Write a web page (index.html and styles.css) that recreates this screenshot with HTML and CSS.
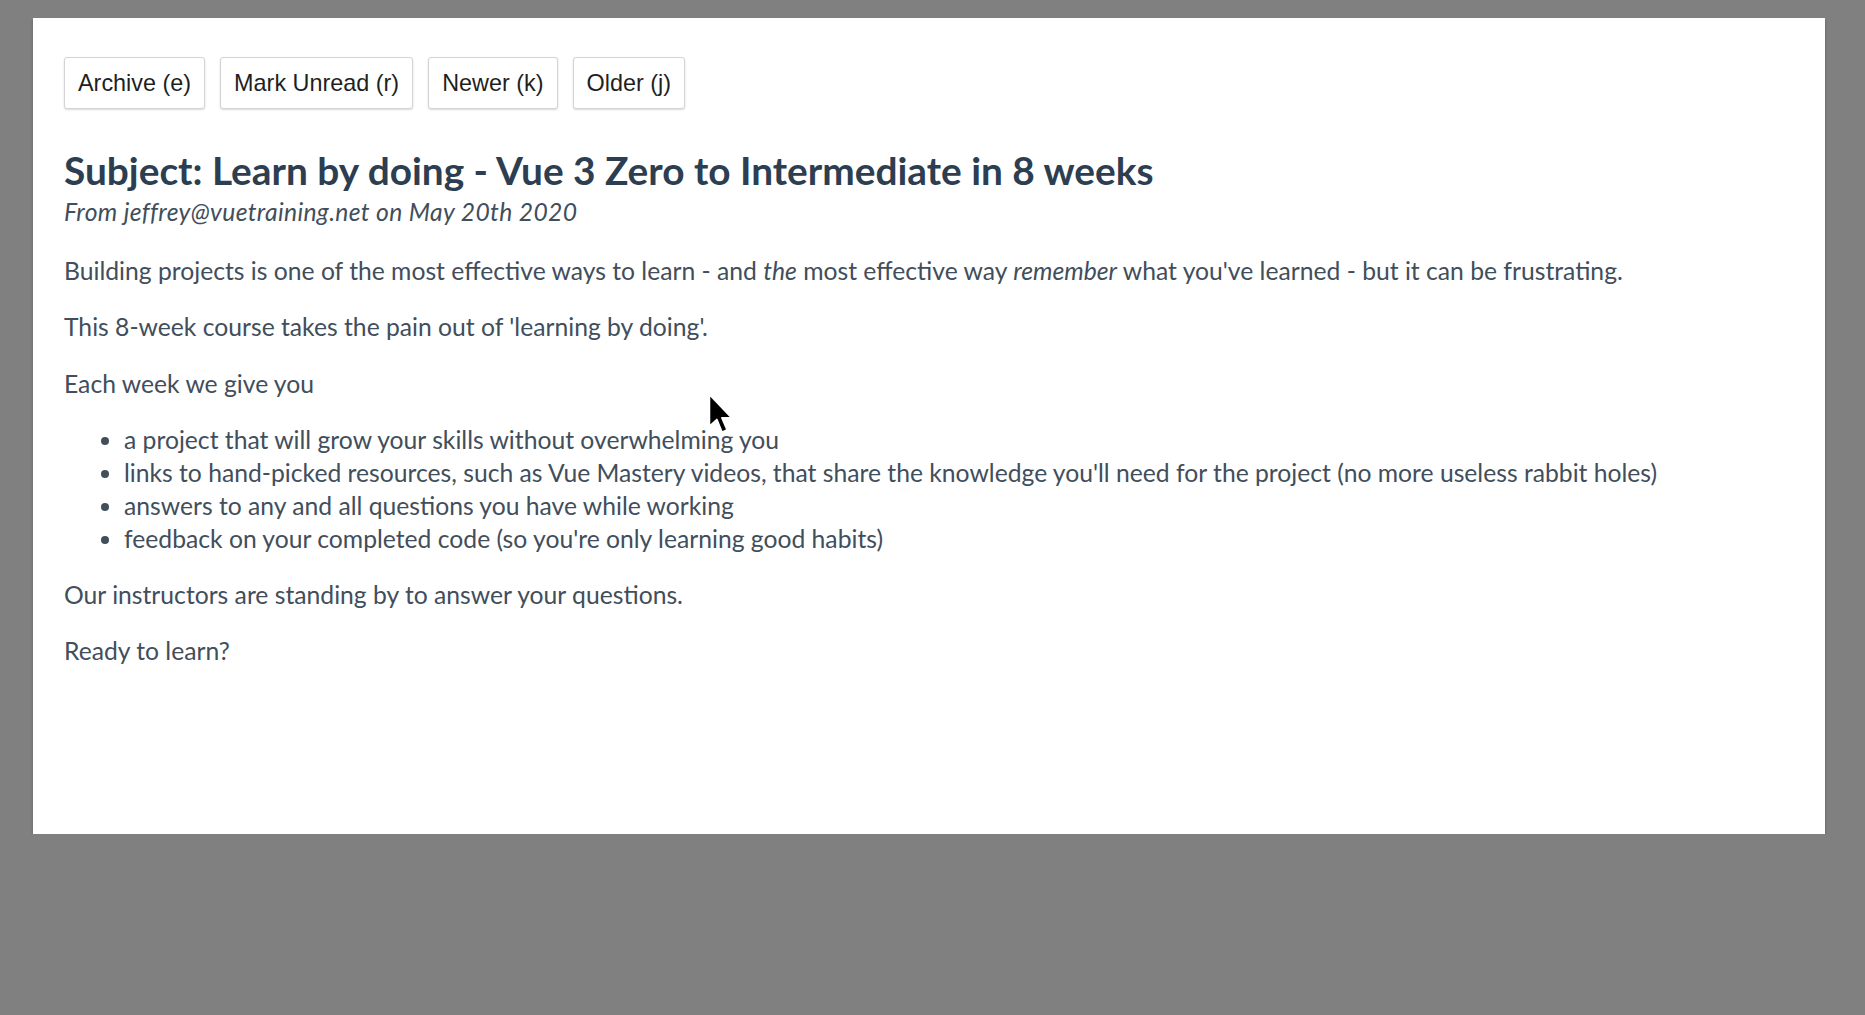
FILE: index.html
```html
<!DOCTYPE html>
<html lang="en">
<head>
<meta charset="utf-8">
<title>Email</title>
<link rel="stylesheet" href="styles.css">
</head>
<body>
<div class="window">
  <div class="toolbar">
    <button class="btn">Archive (e)</button>
    <button class="btn">Mark Unread (r)</button>
    <button class="btn">Newer (k)</button>
    <button class="btn">Older (j)</button>
  </div>
  <h2 class="subject">Subject: Learn by doing - Vue 3 Zero to Intermediate in 8 weeks</h2>
  <div class="from"><em>From jeffrey@vuetraining.net on May 20th 2020</em></div>
  <div class="body">
    <p>Building projects is one of the most effective ways to learn - and <em>the</em> most effective way <em>remember</em> what you've learned - but it can be frustrating.</p>
    <p>This 8-week course takes the pain out of 'learning by doing'.</p>
    <p>Each week we give you</p>
    <ul>
      <li>a project that will grow your skills without overwhelming you</li>
      <li>links to hand-picked resources, such as Vue Mastery videos, that share the knowledge you'll need for the project (no more useless rabbit holes)</li>
      <li>answers to any and all questions you have while working</li>
      <li>feedback on your completed code (so you're only learning good habits)</li>
    </ul>
    <p>Our instructors are standing by to answer your questions.</p>
    <p>Ready to learn?</p>
  </div>
  <svg class="cursor" width="30" height="46" viewBox="0 0 26 40" aria-hidden="true">
    <path d="M2 2 L2 30 L8.5 24 L13 35 L17.5 33 L13 22.5 L21.5 22.5 Z" fill="#000" stroke="#fff" stroke-width="1.6" stroke-linejoin="round"/>
  </svg>
</div>
</body>
</html>
```

FILE: styles.css
```css
html {
  background: #808080;
}
body {
  margin: 0;
  background: #808080;
  font-family: Lato, "Noto Sans", sans-serif;
}
.window {
  position: relative;
  margin: 18px 40px 0 33px;
  width: 1792px;
  height: 816px;
  box-sizing: border-box;
  padding: 39px 31px 0;
  background: #fff;
  box-shadow: 0 2px 3px rgba(0, 0, 0, 0.25);
  color: #2c3e50;
}
.toolbar {
  display: flex;
  gap: 15px;
}
.btn {
  height: 52px;
  padding: 0 13px;
  background: #fff;
  border: 1px solid #d4d4d4;
  border-radius: 3px;
  box-shadow: 0 1px 2px rgba(0, 0, 0, 0.15);
  font-family: "Liberation Sans", Arial, sans-serif;
  font-size: 23.4px;
  color: #1f1f1f;
}
.subject {
  margin: 36px 0 0;
  font-size: 38.8px;
  line-height: 50px;
  font-weight: 700;
  color: #2c3e50;
}
.from {
  font-size: 24.7px;
  line-height: 33px;
  letter-spacing: 0.35px;
  color: #414e5b;
}
.body {
  padding-top: 3.5px;
  font-size: 24.7px;
  line-height: 32.8px;
  color: #414e5b;
}
.body p {
  margin: 23.6px 0;
}
.body ul {
  margin: 23.6px 0;
  padding-left: 60px;
}
.cursor {
  position: absolute;
  left: 674px;
  top: 374px;
}
```
